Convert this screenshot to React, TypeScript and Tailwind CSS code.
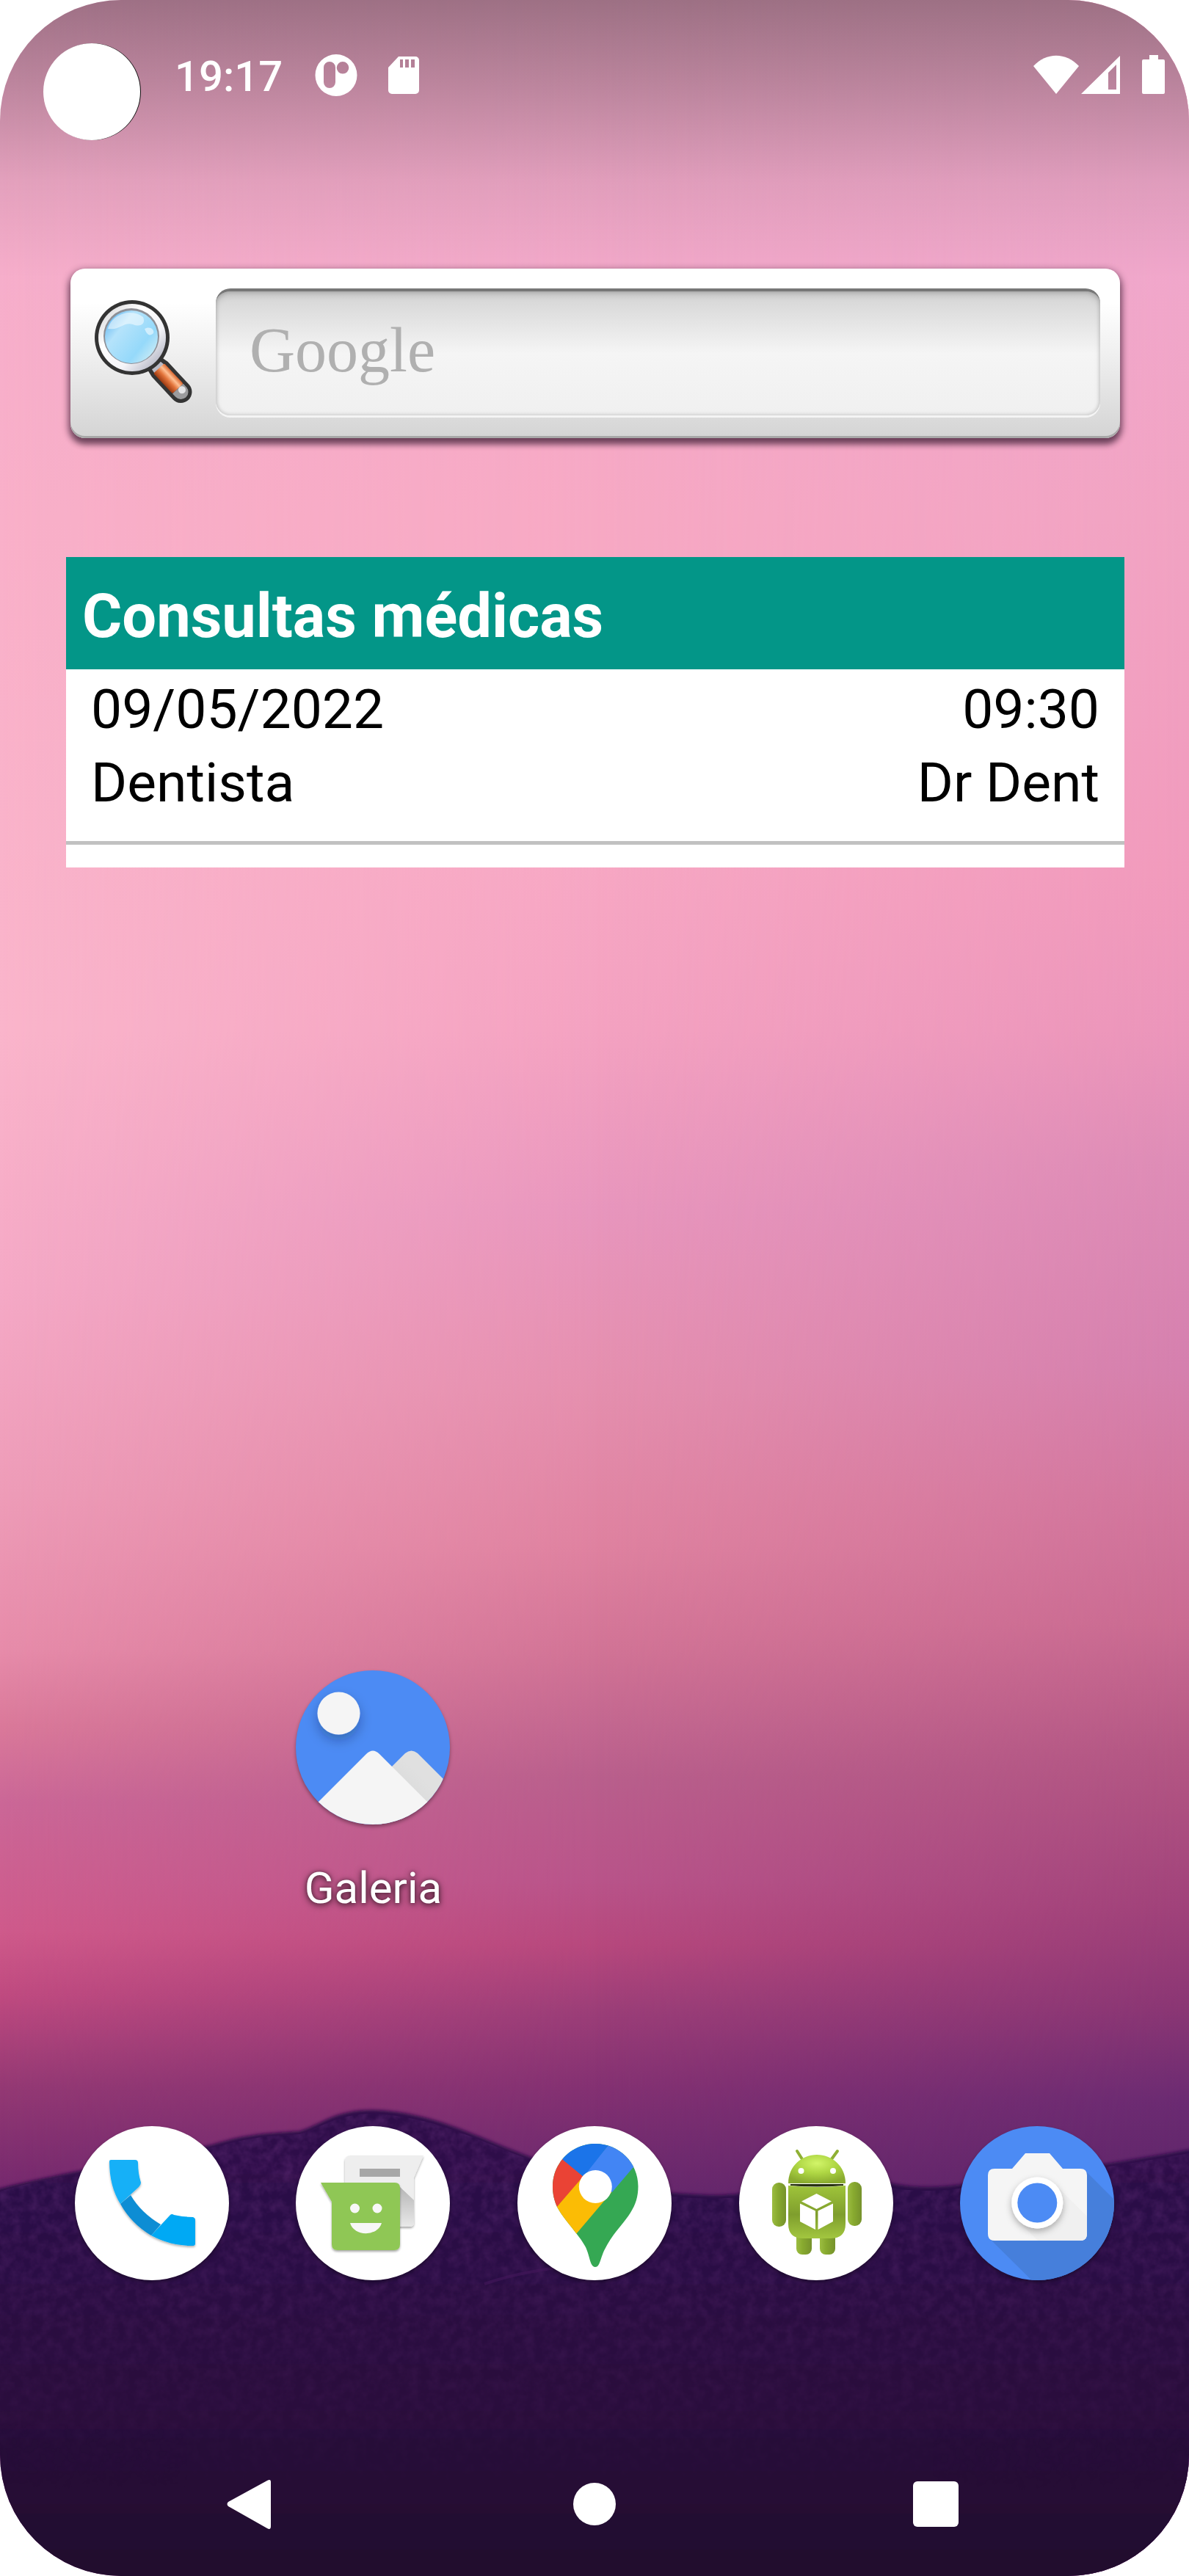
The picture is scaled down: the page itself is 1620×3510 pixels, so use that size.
import type { ReactNode } from "react";

function Wallpaper() {
  return (
    <svg
      className="absolute inset-0 h-full w-full"
      viewBox="0 0 1620 3510"
      preserveAspectRatio="none"
      aria-hidden="true"
    >
      <defs>
        <linearGradient id="skyLeft" x1="0" y1="0" x2="0" y2="1">
          <stop offset="0" stopColor="#f0aaca" />
          <stop offset="0.1" stopColor="#f6aecb" />
          <stop offset="0.2" stopColor="#f9b0c9" />
          <stop offset="0.4" stopColor="#fab5cb" />
          <stop offset="0.5" stopColor="#f5a9c6" />
          <stop offset="0.58" stopColor="#ee9cb8" />
          <stop offset="0.64" stopColor="#e78caa" />
          <stop offset="0.67" stopColor="#da799a" />
          <stop offset="0.7" stopColor="#cb6797" />
          <stop offset="0.75" stopColor="#cf5a8b" />
          <stop offset="0.775" stopColor="#bf4a80" />
          <stop offset="0.81" stopColor="#943974" />
          <stop offset="0.85" stopColor="#75296e" />
        </linearGradient>
        <linearGradient id="skyMid" x1="0" y1="0" x2="0" y2="1">
          <stop offset="0" stopColor="#eeaac8" />
          <stop offset="0.1" stopColor="#f3a9ca" />
          <stop offset="0.2" stopColor="#f7a9c4" />
          <stop offset="0.33" stopColor="#f7a8c4" />
          <stop offset="0.4" stopColor="#f4a2c1" />
          <stop offset="0.47" stopColor="#e896bd" />
          <stop offset="0.54" stopColor="#e58fae" />
          <stop offset="0.6" stopColor="#df82a0" />
          <stop offset="0.64" stopColor="#d27496" />
          <stop offset="0.69" stopColor="#b95f8c" />
          <stop offset="0.73" stopColor="#b9548a" />
          <stop offset="0.755" stopColor="#b7487d" />
          <stop offset="0.78" stopColor="#9c3e78" />
          <stop offset="0.81" stopColor="#843172" />
          <stop offset="0.85" stopColor="#68286d" />
        </linearGradient>
        <linearGradient id="skyRight" x1="0" y1="0" x2="0" y2="1">
          <stop offset="0" stopColor="#eeaac8" />
          <stop offset="0.1" stopColor="#f0a7cb" />
          <stop offset="0.2" stopColor="#f1a3c3" />
          <stop offset="0.34" stopColor="#f19abc" />
          <stop offset="0.4" stopColor="#eb95ba" />
          <stop offset="0.45" stopColor="#de8cb6" />
          <stop offset="0.53" stopColor="#d580ae" />
          <stop offset="0.58" stopColor="#d2769e" />
          <stop offset="0.63" stopColor="#ca6b92" />
          <stop offset="0.68" stopColor="#b45784" />
          <stop offset="0.74" stopColor="#a0427a" />
          <stop offset="0.78" stopColor="#8a3674" />
          <stop offset="0.815" stopColor="#6b2b72" />
          <stop offset="0.85" stopColor="#5e2569" />
        </linearGradient>
        <linearGradient id="fadeMid">
          <stop offset="0" stopColor="#000" />
          <stop offset="0.5" stopColor="#fff" />
        </linearGradient>
        <linearGradient id="fadeRight">
          <stop offset="0.5" stopColor="#000" />
          <stop offset="1" stopColor="#fff" />
        </linearGradient>
        <mask id="maskMid">
          <rect width="1620" height="3510" fill="url(#fadeMid)" />
        </mask>
        <mask id="maskRight">
          <rect width="1620" height="3510" fill="url(#fadeRight)" />
        </mask>
        <linearGradient id="scrim" x1="0" y1="0" x2="0" y2="1">
          <stop offset="0" stopColor="#000" stopOpacity="0.34" />
          <stop offset="0.3" stopColor="#000" stopOpacity="0.22" />
          <stop offset="0.65" stopColor="#000" stopOpacity="0.07" />
          <stop offset="1" stopColor="#000" stopOpacity="0" />
        </linearGradient>
        <linearGradient id="hill" x1="0" y1="0" x2="0" y2="1">
          <stop offset="0" stopColor="#2e0c4a" />
          <stop offset="0.35" stopColor="#2b0b44" />
          <stop offset="0.65" stopColor="#290c3b" />
          <stop offset="1" stopColor="#21082c" />
        </linearGradient>
        <linearGradient id="grainFade" x1="0" y1="2870" x2="0" y2="3400" gradientUnits="userSpaceOnUse">
          <stop offset="0" stopColor="#fff" />
          <stop offset="1" stopColor="#000" />
        </linearGradient>
        <mask id="grainMask">
          <path
            d="M0 2986 C60 2966 200 2946 290 2926 C330 2916 350 2910 408 2908 C440 2898 460 2880 508 2880 C590 2884 640 2912 725 2944 C800 2974 860 2992 970 2996 C1060 2994 1150 2966 1200 2978 C1240 2988 1280 2986 1320 2980 C1420 2966 1520 2952 1620 2934 V3510 H0 Z"
            fill="url(#grainFade)"
          />
        </mask>
        <filter id="grain" x="0" y="0" width="100%" height="100%">
          <feTurbulence type="fractalNoise" baseFrequency="0.07" numOctaves="3" seed="4" />
          <feColorMatrix values="0 0 0 0 0.25  0 0 0 0 0.06  0 0 0 0 0.32  1.4 0 0 0 -0.45" />
        </filter>
        <filter id="ridge" x="-5%" y="-5%" width="110%" height="110%">
          <feGaussianBlur stdDeviation="2" />
        </filter>
      </defs>
      <rect width="1620" height="3510" fill="url(#skyLeft)" />
      <rect width="1620" height="3510" fill="url(#skyMid)" mask="url(#maskMid)" />
      <rect width="1620" height="3510" fill="url(#skyRight)" mask="url(#maskRight)" />
      <rect width="1620" height="380" fill="url(#scrim)" />
      <path
        d="M-20 2988 C40 2968 200 2942 290 2922 C330 2910 350 2907 408 2904 C440 2894 455 2875 508 2875 C590 2878 640 2908 725 2940 C800 2968 860 2988 970 2991 C1060 2990 1150 2960 1200 2971 C1240 2983 1280 2981 1320 2975 C1420 2962 1520 2948 1640 2925 V3530 H-20 Z"
        fill="url(#hill)"
        filter="url(#ridge)"
      />
      <rect y="2860" width="1620" height="650" filter="url(#grain)" mask="url(#grainMask)" opacity="0.4" />
      <path d="M660 3112 C700 3098 740 3092 800 3084" stroke="#45185c" strokeWidth="4" fill="none" opacity="0.6" />
    </svg>
  );
}

function StatusBar() {
  return (
    <header className="flex items-start justify-between pt-[59px] pr-[32px] pl-[59px] text-white">
      <div className="flex items-start">
        <div className="h-[132px] w-[132px] rounded-full bg-white shadow-[1px_0_0_0_#111]" />
        <time className="ml-[47px] pt-[11px] text-[58px] leading-[68px] font-medium">19:17</time>
        <svg className="mt-[14px] ml-[43px] h-[60px] w-[60px]" viewBox="0 0 60 60" fill="currentColor" aria-hidden="true">
          <path
            fillRule="evenodd"
            d="M30 1a28.500 28.500 0 1 1 0 57a28.500 28.500 0 1 1 0-57Z M21 11a8 8 0 0 0-8 8v20a8 8 0 0 0 16 0V19a8 8 0 0 0-8-8Z M39 11a8.300 8.300 0 1 0 0 16.600a8.300 8.300 0 1 0 0-16.600Z"
          />
        </svg>
        <svg className="mt-[17px] ml-[40px] h-[54px] w-[44px]" viewBox="0 0 44 54" fill="currentColor" aria-hidden="true">
          <path
            fillRule="evenodd"
            d="M15 1H38a5 5 0 0 1 5 5V47a5 5 0 0 1-5 5H6a5 5 0 0 1-5-5V16Z M17 5V16H21V5Z M24 5V16H29V5Z M32 5V16H37V5Z"
          />
        </svg>
      </div>
      <div className="flex items-start pt-[16px]">
        <svg className="h-[54px] w-[64px]" viewBox="0 0 64 54" fill="currentColor" aria-hidden="true">
          <path d="M1 15C19-4 45-4 63 15L32 53Z" />
        </svg>
        <svg className="ml-[2px] h-[54px] w-[54px]" viewBox="0 0 54 54" fill="currentColor" aria-hidden="true">
          <path fillRule="evenodd" d="M53 1V53H0Z M48 13L37 24V47H48Z" />
        </svg>
        <svg className="ml-[29px] h-[54px] w-[32px]" viewBox="0 0 32 54" fill="currentColor" aria-hidden="true">
          <path d="M10 0H22V6H29a2 2 0 0 1 2 2V51a2 2 0 0 1-2 2H2a2 2 0 0 1-2-2V8a2 2 0 0 1 2-2H10Z" />
        </svg>
      </div>
    </header>
  );
}

function Magnifier() {
  return (
    <svg className="h-[150px] w-[140px]" viewBox="0 0 140 150" aria-hidden="true">
      <defs>
        <linearGradient id="ring" x1="0" y1="0" x2="1" y2="1">
          <stop offset="0" stopColor="#cfcfd2" />
          <stop offset="0.35" stopColor="#ffffff" />
          <stop offset="0.65" stopColor="#f4f4f8" />
          <stop offset="1" stopColor="#9a9cae" />
        </linearGradient>
        <linearGradient id="lens" x1="0" y1="0.1" x2="1" y2="0.9">
          <stop offset="0" stopColor="#58b0ee" />
          <stop offset="0.3" stopColor="#b5e3fb" />
          <stop offset="0.7" stopColor="#95d9fa" />
          <stop offset="1" stopColor="#d6eff5" />
        </linearGradient>
        <linearGradient id="wood" x1="0" y1="1" x2="0" y2="0">
          <stop offset="0" stopColor="#9c3a12" />
          <stop offset="0.4" stopColor="#e2733a" />
          <stop offset="0.7" stopColor="#ffbf92" />
          <stop offset="1" stopColor="#d9662f" />
        </linearGradient>
      </defs>
      <g transform="translate(86 90) rotate(47)">
        <path d="M-14-10L10-15H52a15 15 0 0 1 0 30H10L-14 10Z" fill="#343434" />
        <path d="M-10-6L10-9V9L-10 6Z" fill="#b9bac6" />
        <rect x="8" y="-10" width="38" height="20" rx="2" fill="url(#wood)" />
        <path d="M46-10H52a10 10 0 0 1 0 20H46Z" fill="#9b9b9d" />
        <circle cx="51" cy="-3" r="5" fill="#e4e4e6" />
      </g>
      <circle cx="55" cy="54" r="51" fill="#333" />
      <circle cx="55" cy="54" r="46" fill="url(#ring)" />
      <circle cx="54" cy="52" r="38" fill="#8d8f96" />
      <circle cx="54" cy="53" r="36" fill="url(#lens)" />
      <path d="M22 42C28 20 56 14 70 26C74 36 66 40 56 36C44 32 38 44 24 42Z" fill="#fff" opacity="0.5" />
      <path d="M72 42C78 38 86 42 84 48C80 52 76 52 72 42Z" fill="#fff" opacity="0.55" />
    </svg>
  );
}

function SearchWidget() {
  return (
    <form
      className="mr-[94px] ml-[96px] flex h-[231px] items-start rounded-[20px] bg-linear-to-b from-white from-20% via-[#f0f0f0] to-[#d4d4d4] pt-[27px] pr-[27px] shadow-[0_4px_10px_3px_rgba(50,20,45,0.45),0_8px_8px_0_rgba(40,15,35,0.45),inset_0_-3px_0_0_#a8a8a8]"
      onSubmit={(event) => event.preventDefault()}
    >
      <button type="submit" aria-label="Pesquisar" className="mt-[13px] ml-[29px]">
        <Magnifier />
      </button>
      <input
        type="search"
        aria-label="Google"
        placeholder="Google"
        className="ml-[29px] h-[173px] min-w-0 flex-1 rounded-[20px] border-t-4 border-[#777] bg-linear-to-b from-[#d4d4d4] via-[#f5f5f5] to-[#f0f0f0] px-[46px] pb-[10px] font-['Liberation_Serif',serif] text-[86px] text-neutral-700 shadow-[inset_0_6px_8px_0_rgba(0,0,0,0.1),inset_0_0_5px_1px_rgba(0,0,0,0.16),0_3px_0_0_#f4f4f4] outline-none placeholder:text-[#b0b0b0]"
      />
    </form>
  );
}

function AppointmentsWidget() {
  return (
    <section className="mr-[88px] ml-[90px] bg-white pb-[31px]">
      <h1 className="bg-[#039688] px-[22px] pt-[32px] pb-[23px] text-[83px] leading-[98px] font-bold text-white">
        Consultas médicas
      </h1>
      <div className="border-b-[5px] border-[#c1c1c1] px-[34px] pt-[4px] pb-[30px] text-[75px] leading-[100px] text-black">
        <div className="flex justify-between">
          <span>09/05/2022</span>
          <span>09:30</span>
        </div>
        <div className="flex justify-between">
          <span>Dentista</span>
          <span>Dr Dent</span>
        </div>
      </div>
    </section>
  );
}

function AppIcon({ children, background }: { children: ReactNode; background: string }) {
  return (
    <svg
      className={`h-[210px] w-[210px] overflow-hidden rounded-full shadow-[0_3px_5px_0_rgba(0,0,0,0.35)] ${background}`}
      viewBox="0 0 210 210"
      aria-hidden="true"
    >
      {children}
    </svg>
  );
}

function GalleryIcon() {
  return (
    <AppIcon background="bg-[#4c8bf4]">
      <defs>
        <filter id="sunShade" x="-50%" y="-50%" width="200%" height="200%">
          <feDropShadow dx="0" dy="8" stdDeviation="8" floodColor="#123" floodOpacity="0.3" />
        </filter>
        <linearGradient id="farPeak" x1="0" y1="1" x2="1" y2="0">
          <stop offset="0" stopColor="#cdd0d0" />
          <stop offset="0.6" stopColor="#e0e0e0" />
        </linearGradient>
      </defs>
      <circle cx="58.500" cy="58.500" r="29" fill="#f5f5f5" filter="url(#sunShade)" />
      <path d="M110 152L149 113Q157.500 106 166 113L240 187V240H110Z" fill="url(#farPeak)" />
      <path d="M-10 220L96 114Q105 105 114 114L220 220Z" fill="#f5f5f5" />
    </AppIcon>
  );
}

function PhoneIcon() {
  return (
    <AppIcon background="bg-white">
      <defs>
        <filter id="phoneShade" x="-20%" y="-20%" width="140%" height="140%">
          <feDropShadow dx="0" dy="2" stdDeviation="1.500" floodColor="#000" floodOpacity="0.3" />
        </filter>
      </defs>
      <g filter="url(#phoneShade)">
        <path d="M62 106L76 94Q90 118 117 134L104 149Q77 133 62 106Z" fill="#0f8dd4" />
        <path d="M49 46H82Q86 46 86 50Q86 64 90 77Q90 80 87 83L62 106Q47 82 47 48Q47 46 49 46Z" fill="#19b0f7" />
        <path d="M104 149L130 121Q132 119 135 121Q147 124 161 124Q164 125 164 128V160Q164 163 161 163Q130 163 104 149Z" fill="#05a9f4" />
      </g>
    </AppIcon>
  );
}

function MessagesIcon() {
  return (
    <AppIcon background="bg-white">
      <defs>
        <filter id="bubbleShade" x="-20%" y="-20%" width="140%" height="140%">
          <feDropShadow dx="0" dy="2" stdDeviation="1.500" floodColor="#000" floodOpacity="0.35" />
        </filter>
        <linearGradient id="cast" x1="0" y1="0" x2="0" y2="1">
          <stop offset="0" stopColor="#b5b5b5" />
          <stop offset="1" stopColor="#e9e9e9" />
        </linearGradient>
      </defs>
      <path
        d="M75 40H174L161 70V131Q161 137 155 137H73Q67 137 67 131V48Q67 40 75 40Z"
        fill="#eee"
        filter="url(#bubbleShade)"
      />
      <path d="M141 82L161 101V131Q161 137 155 137H141Z" fill="url(#cast)" />
      <rect x="87" y="58" width="55" height="11" fill="#a7a7a7" />
      <path
        d="M34 77H135Q142 77 142 84V161Q142 169 134 169H57Q49 169 49 161V103Z"
        fill="#8fc754"
        filter="url(#bubbleShade)"
      />
      <circle cx="80.500" cy="112" r="6.500" fill="#f7f7f7" />
      <circle cx="111" cy="112" r="6.500" fill="#f7f7f7" />
      <path d="M74 132H117A22 18 0 0 1 74 132Z" fill="#f7f7f7" />
    </AppIcon>
  );
}

function MapsIcon() {
  return (
    <AppIcon background="bg-white">
      <defs>
        <clipPath id="pin">
          <path d="M106 24C139 24 164.500 50 164.500 82C164.500 96 161 107 154 118C144 134 130 146 120 166C113 178 113 192 106 192C99 192 99 178 93 165C84 148 62 126 54 110C50 101 48 93 48 82C48 50 74 24 106 24Z" />
        </clipPath>
      </defs>
      <g clipPath="url(#pin)">
        <rect width="210" height="210" fill="#35a853" />
        <path d="M40 20L62 45L90 69L49 116H0V20Z" fill="#ea4335" />
        <path d="M90 68L130 88L80 147L40 150V126Z" fill="#fbbc05" />
        <path d="M106 82L94 62L123 27L140 10L180 40L157 57L129 90Z" fill="#4285f4" />
        <path d="M62 46L40 20L110 0H146L123 27L90 69Z" fill="#1b74e9" />
      </g>
      <circle cx="106.300" cy="82.500" r="22.500" fill="#fff" />
    </AppIcon>
  );
}

function AndroidIcon() {
  return (
    <AppIcon background="bg-white">
      <defs>
        <radialGradient id="head" cx="0.5" cy="0.3" r="0.7">
          <stop offset="0" stopColor="#d2f569" />
          <stop offset="0.5" stopColor="#aed643" />
          <stop offset="1" stopColor="#8aab30" />
        </radialGradient>
        <linearGradient id="torso" x1="0" y1="0" x2="0" y2="1">
          <stop offset="0" stopColor="#9fc43a" />
          <stop offset="0.55" stopColor="#7f9e2d" />
          <stop offset="1" stopColor="#a2c63f" />
        </linearGradient>
        <linearGradient id="limb">
          <stop offset="0" stopColor="#9cbd41" />
          <stop offset="0.4" stopColor="#88aa2f" />
          <stop offset="1" stopColor="#76922c" />
        </linearGradient>
      </defs>
      <path d="M79 34L86 45M134 34L126 45" stroke="#8fb034" strokeWidth="4" strokeLinecap="round" />
      <path d="M67 78C67 54 86 39 106 39C126 39 145 54 145 78Z" fill="url(#head)" />
      <path d="M70 79H142V81Q106 84 70 81Z" fill="#26300e" />
      <circle cx="84.500" cy="61" r="4" fill="#fff" />
      <circle cx="128" cy="61" r="4" fill="#fff" />
      <rect x="78" y="140" width="21" height="35" rx="8" fill="url(#limb)" />
      <rect x="110" y="140" width="21" height="35" rx="8" fill="url(#limb)" />
      <path d="M67 81Q106 85 145 81V133Q145 153 125 153H87Q67 153 67 133Z" fill="url(#torso)" />
      <rect x="45" y="77" width="19" height="60" rx="9" fill="url(#limb)" />
      <rect x="148" y="76" width="19" height="60" rx="9" fill="url(#limb)" />
      <path
        d="M105.500 92L126 102.500L105.500 113L85 102.500Z M83 105.500L104 115.500V141L83 130Z M107.500 115.500L128 105.500V130L107.500 141Z"
        fill="#fff"
      />
    </AppIcon>
  );
}

function CameraIcon() {
  return (
    <AppIcon background="bg-[#4c8bf4]">
      <defs>
        <filter id="lensShade" x="-50%" y="-50%" width="200%" height="200%">
          <feDropShadow dx="0" dy="4" stdDeviation="5" floodColor="#000" floodOpacity="0.3" />
        </filter>
      </defs>
      <path d="M172 62L240 130V240H128L41 154Z" fill="#467fdb" />
      <path d="M47 58H71L89 37H122L140 58H164Q173 58 173 67V147Q173 156 164 156H47Q38 156 38 147V67Q38 58 47 58Z" fill="#f5f5f5" />
      <path d="M132 82L173 123V147Q173 156 164 156H106L84 134Z" fill="#f0f0f0" />
      <circle cx="105.300" cy="104.500" r="35" fill="#fff" filter="url(#lensShade)" />
      <circle cx="105.300" cy="104.500" r="27" fill="#4c8bf4" />
    </AppIcon>
  );
}

const dock = [
  { name: "Telefone", icon: <PhoneIcon /> },
  { name: "Mensagens", icon: <MessagesIcon /> },
  { name: "Maps", icon: <MapsIcon /> },
  { name: "Dev Tools", icon: <AndroidIcon /> },
  { name: "Câmera", icon: <CameraIcon /> },
];

function NavigationBar() {
  return (
    <nav className="grid grid-cols-3 items-center px-28 pb-[58px]">
      <button type="button" aria-label="Voltar" className="flex justify-center">
        <svg className="h-[80px] w-[80px]" viewBox="0 0 80 80" fill="#fff" aria-hidden="true">
          <path d="M59 8Q64 5 64 10V70Q64 76 59 73L6 43Q3 40 6 37Z" />
        </svg>
      </button>
      <button type="button" aria-label="Início" className="flex justify-center">
        <span className="h-[58px] w-[58px] rounded-full bg-white" />
      </button>
      <button type="button" aria-label="Recentes" className="flex justify-center">
        <span className="h-[62px] w-[62px] rounded-md bg-white" />
      </button>
    </nav>
  );
}

export default function App() {
  return (
    <div className="bg-white">
      <div className="relative isolate flex min-h-screen flex-col overflow-hidden rounded-[165px] font-[Roboto,sans-serif]">
        <div className="absolute inset-0 -z-10">
          <Wallpaper />
        </div>
        <StatusBar />
        <main className="mt-[175px] flex flex-1 flex-col">
          <SearchWidget />
          <div className="mt-[162px]">
            <AppointmentsWidget />
          </div>
          <div className="mt-auto grid grid-cols-5 px-14">
            <button type="button" className="col-start-2 flex flex-col items-center">
              <GalleryIcon />
              <span className="mt-[52px] text-[60px] leading-[70px] text-white [text-shadow:0_2px_10px_rgba(0,0,0,0.75),0_0_4px_rgba(0,0,0,0.3)]">
                Galeria
              </span>
            </button>
          </div>
          <div className="mt-[289px] mb-[265px] grid grid-cols-5 px-14">
            {dock.map((app) => (
              <button key={app.name} type="button" aria-label={app.name} className="flex justify-center">
                {app.icon}
              </button>
            ))}
          </div>
        </main>
        <NavigationBar />
      </div>
    </div>
  );
}
